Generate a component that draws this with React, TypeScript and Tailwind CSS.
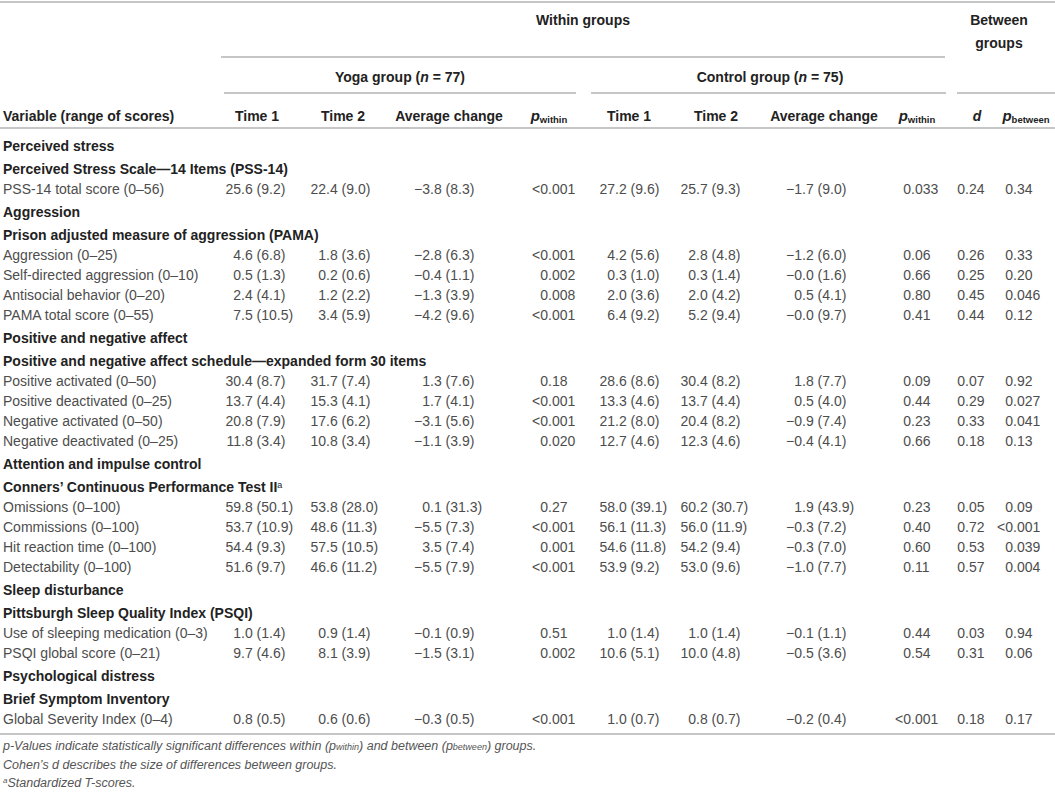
type Row = string[];
type Section = { title: string; sub: React.ReactNode; rows: Row[] };

const sections: Section[] = [
  {
    title: "Perceived stress",
    sub: "Perceived Stress Scale—14 Items (PSS-14)",
    rows: [
      ["PSS-14 total score (0–56)", "25.6 (9.2)", "22.4 (9.0)", "−3.8 (8.3)", "<0.001", "27.2 (9.6)", "25.7 (9.3)", "−1.7 (9.0)", "0.033", "0.24", "0.34"],
    ],
  },
  {
    title: "Aggression",
    sub: "Prison adjusted measure of aggression (PAMA)",
    rows: [
      ["Aggression (0–25)", "4.6 (6.8)", "1.8 (3.6)", "−2.8 (6.3)", "<0.001", "4.2 (5.6)", "2.8 (4.8)", "−1.2 (6.0)", "0.06", "0.26", "0.33"],
      ["Self-directed aggression (0–10)", "0.5 (1.3)", "0.2 (0.6)", "−0.4 (1.1)", "0.002", "0.3 (1.0)", "0.3 (1.4)", "−0.0 (1.6)", "0.66", "0.25", "0.20"],
      ["Antisocial behavior (0–20)", "2.4 (4.1)", "1.2 (2.2)", "−1.3 (3.9)", "0.008", "2.0 (3.6)", "2.0 (4.2)", "0.5 (4.1)", "0.80", "0.45", "0.046"],
      ["PAMA total score (0–55)", "7.5 (10.5)", "3.4 (5.9)", "−4.2 (9.6)", "<0.001", "6.4 (9.2)", "5.2 (9.4)", "−0.0 (9.7)", "0.41", "0.44", "0.12"],
    ],
  },
  {
    title: "Positive and negative affect",
    sub: "Positive and negative affect schedule—expanded form 30 items",
    rows: [
      ["Positive activated (0–50)", "30.4 (8.7)", "31.7 (7.4)", "1.3 (7.6)", "0.18", "28.6 (8.6)", "30.4 (8.2)", "1.8 (7.7)", "0.09", "0.07", "0.92"],
      ["Positive deactivated (0–25)", "13.7 (4.4)", "15.3 (4.1)", "1.7 (4.1)", "<0.001", "13.3 (4.6)", "13.7 (4.4)", "0.5 (4.0)", "0.44", "0.29", "0.027"],
      ["Negative activated (0–50)", "20.8 (7.9)", "17.6 (6.2)", "−3.1 (5.6)", "<0.001", "21.2 (8.0)", "20.4 (8.2)", "−0.9 (7.4)", "0.23", "0.33", "0.041"],
      ["Negative deactivated (0–25)", "11.8 (3.4)", "10.8 (3.4)", "−1.1 (3.9)", "0.020", "12.7 (4.6)", "12.3 (4.6)", "−0.4 (4.1)", "0.66", "0.18", "0.13"],
    ],
  },
  {
    title: "Attention and impulse control",
    sub: (
      <>
        Conners’ Continuous Performance Test II
        <sup className="text-[9px] font-normal">a</sup>
      </>
    ),
    rows: [
      ["Omissions (0–100)", "59.8 (50.1)", "53.8 (28.0)", "0.1 (31.3)", "0.27", "58.0 (39.1)", "60.2 (30.7)", "1.9 (43.9)", "0.23", "0.05", "0.09"],
      ["Commissions (0–100)", "53.7 (10.9)", "48.6 (11.3)", "−5.5 (7.3)", "<0.001", "56.1 (11.3)", "56.0 (11.9)", "−0.3 (7.2)", "0.40", "0.72", "<0.001"],
      ["Hit reaction time (0–100)", "54.4 (9.3)", "57.5 (10.5)", "3.5 (7.4)", "0.001", "54.6 (11.8)", "54.2 (9.4)", "−0.3 (7.0)", "0.60", "0.53", "0.039"],
      ["Detectability (0–100)", "51.6 (9.7)", "46.6 (11.2)", "−5.5 (7.9)", "<0.001", "53.9 (9.2)", "53.0 (9.6)", "−1.0 (7.7)", "0.11", "0.57", "0.004"],
    ],
  },
  {
    title: "Sleep disturbance",
    sub: "Pittsburgh Sleep Quality Index (PSQI)",
    rows: [
      ["Use of sleeping medication (0–3)", "1.0 (1.4)", "0.9 (1.4)", "−0.1 (0.9)", "0.51", "1.0 (1.4)", "1.0 (1.4)", "−0.1 (1.1)", "0.44", "0.03", "0.94"],
      ["PSQI global score (0–21)", "9.7 (4.6)", "8.1 (3.9)", "−1.5 (3.1)", "0.002", "10.6 (5.1)", "10.0 (4.8)", "−0.5 (3.6)", "0.54", "0.31", "0.06"],
    ],
  },
  {
    title: "Psychological distress",
    sub: "Brief Symptom Inventory",
    rows: [
      ["Global Severity Index (0–4)", "0.8 (0.5)", "0.6 (0.6)", "−0.3 (0.5)", "<0.001", "1.0 (0.7)", "0.8 (0.7)", "−0.2 (0.4)", "<0.001", "0.18", "0.17"],
    ],
  },
];

// width of the integer part box, so the decimal point lines up per column
const intWidths = [
  "w-[20px]", "w-[33px]", "w-[37px]", "w-[43px]",
  "w-[22px]", "w-[31px]", "w-[35px]", "w-[30px]",
  "w-[12px]", "w-[12px]",
];

const grid =
  "grid grid-cols-[221px_72px_100px_112px_88px_72px_102px_114px_72px_48px_54px]";

const line = "h-[2px] bg-[#c6c6c6]";

function Num({ value, w }: { value: string; w: string }) {
  const i = value.indexOf(".");
  return (
    <div className="flex whitespace-nowrap">
      <span className={`${w} flex justify-end shrink-0`}>{value.slice(0, i)}</span>
      <span>{value.slice(i)}</span>
    </div>
  );
}

function P({ sub }: { sub: string }) {
  return (
    <span className="whitespace-nowrap">
      <span className="italic text-[15px]">p</span>
      <span className="text-[9.5px] relative top-[2px]">{sub}</span>
    </span>
  );
}

export default function App() {
  return (
    <div className="w-[1055px] h-[792px] overflow-hidden bg-white font-['Liberation_Sans',Arial,sans-serif] text-[14px] text-[#4d4d4d]">
      <div className={`${line} mt-px`} />

      {/* Header */}
      <div className={`${grid} grid-rows-[53px_2px_34px_2px_33px] font-bold text-[#222]`}>
        <div className="col-start-2 col-span-8 row-start-1 pt-[6px] leading-[23px] text-center pr-[8px]">
          Within groups
        </div>
        <div className="col-start-2 col-span-8 row-start-2 mr-[8px] bg-[#c6c6c6]" />
        <div className="col-start-10 col-span-2 row-start-1 row-span-3 pt-[6px] leading-[23px] text-center pr-[10px]">
          Between
          <br />
          groups
        </div>

        <div className="col-start-2 col-span-4 row-start-3 pt-[9px] leading-[20px] text-center pr-[14px]">
          Yoga group (<span className="italic">n</span> = 77)
        </div>
        <div className="col-start-6 col-span-4 row-start-3 pt-[9px] leading-[20px] text-center pr-[6px]">
          Control group (<span className="italic">n</span> = 75)
        </div>
        <div className="col-start-2 col-span-4 row-start-4 ml-[3px] mr-[17px] bg-[#c6c6c6]" />
        <div className="col-start-6 col-span-4 row-start-4 -ml-[2px] mr-[7px] bg-[#c6c6c6]" />
        <div className="col-start-10 col-span-2 row-start-4 ml-[4px] bg-[#c6c6c6]" />

        <div className="col-start-1 row-start-5 pt-[12px] leading-[20px] pl-[3px]">Variable (range of scores)</div>
        <div className="row-start-5 pt-[12px] leading-[20px] text-center">Time 1</div>
        <div className="row-start-5 pt-[12px] leading-[20px] text-center">Time 2</div>
        <div className="row-start-5 pt-[12px] leading-[20px] text-center">Average change</div>
        <div className="row-start-5 pt-[12px] leading-[20px] text-center"><P sub="within" /></div>
        <div className="row-start-5 pt-[12px] leading-[20px] text-center">Time 1</div>
        <div className="row-start-5 pt-[12px] leading-[20px] text-center">Time 2</div>
        <div className="row-start-5 pt-[12px] leading-[20px] text-center">Average change</div>
        <div className="row-start-5 pt-[12px] leading-[20px] text-center"><P sub="within" /></div>
        <div className="row-start-5 pt-[12px] leading-[20px] text-center italic">d</div>
        <div className="row-start-5 pt-[12px] leading-[20px] text-center pr-[4px]"><P sub="between" /></div>
      </div>
      <div className={line} />

      {/* Body */}
      <div className="py-[4px]">
        {sections.map((s) => (
          <div key={s.title}>
            <div className="h-[23px] pt-[3px] leading-[20px] pl-[3px] font-bold text-[#222]">{s.title}</div>
            <div className="h-[23px] pt-[3px] leading-[20px] pl-[3px] font-bold text-[#222] whitespace-nowrap">{s.sub}</div>
            {s.rows.map((r) => (
              <div key={r[0]} className={`${grid} h-[20px] leading-[20px]`}>
                <div className="pl-[3px] whitespace-nowrap">{r[0]}</div>
                {r.slice(1).map((v, i) => (
                  <Num key={i} value={v} w={intWidths[i]} />
                ))}
              </div>
            ))}
          </div>
        ))}
      </div>
      <div className={line} />

      {/* Footnotes */}
      <div className="mt-[2px] pl-[3px] italic text-[12.5px] leading-[18px] text-[#555]">
        <div>
          p-Values indicate statistically significant differences within (p
          <span className="text-[9px]">within</span>) and between (p
          <span className="text-[9px]">between</span>) groups.
        </div>
        <div>Cohen’s d describes the size of differences between groups.</div>
        <div>
          <sup className="text-[8px]">a</sup>Standardized T-scores.
        </div>
      </div>
    </div>
  );
}
